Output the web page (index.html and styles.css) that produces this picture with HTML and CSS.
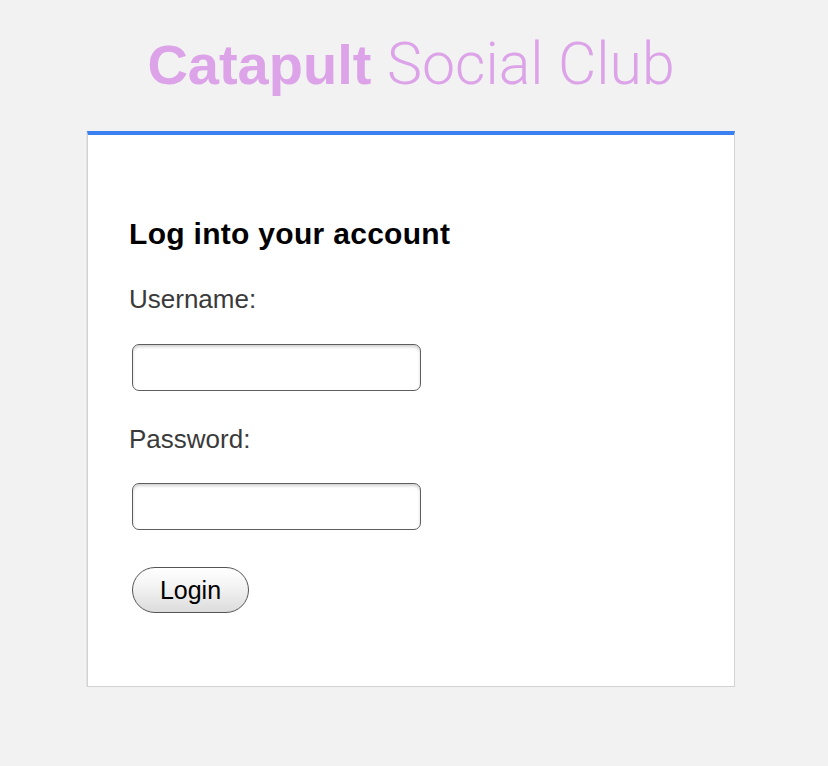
FILE: index.html
```html
<!DOCTYPE html>
<html>
<head>
<meta charset="utf-8">
<link rel="stylesheet" href="styles.css">
</head>
<body>
<div class="page">
  <h1 class="brand"><span class="brand-bold">Catapult</span> <span class="brand-light">Social Club</span></h1>
  <div class="card">
    <h2 class="heading">Log into your account</h2>
    <form class="form">
      <label class="label">Username:</label>
      <input class="field field-user" type="text">
      <label class="label label-pass">Password:</label>
      <input class="field field-pass" type="password">
      <button class="btn" type="button">Login</button>
    </form>
  </div>
</div>
</body>
</html>
```

FILE: styles.css
```css
html, body {
  margin: 0;
  padding: 0;
  background: #f2f2f2;
}
body {
  font-family: "Liberation Sans", Arial, sans-serif;
  height: 766px;
  overflow: hidden;
}
.page {
  width: 648px;
  margin-left: 87px;
  display: flex;
  flex-direction: column;
}
.brand {
  margin: 30px 0 0 0;
  height: 67px;
  font-size: 56px;
  line-height: 67px;
  text-align: center;
  color: #dca3e8;
  font-weight: normal;
  white-space: nowrap;
}
.brand-bold {
  font-weight: bold;
}
.brand-light {
  font-family: "Roboto", "Liberation Sans", sans-serif;
  font-weight: 300;
  font-size: 59px;
}
.card {
  margin-top: 34px;
  background: #fff;
  border: 1px solid #d2d2d2;
  border-top: 4px solid #3a80f0;
  padding: 0 41px 73px 41px;
  box-shadow: -1px 0 0 #e4e4e4;
}
.heading {
  margin: 82px 0 0 0;
  font-size: 30px;
  letter-spacing: 0.3px;
  line-height: 34px;
  font-weight: bold;
  color: #000;
}
.form {
  display: flex;
  flex-direction: column;
  align-items: flex-start;
}
.label {
  margin-top: 34px;
  font-size: 26px;
  line-height: 29px;
  color: #3a3a3a;
}
.label-pass {
  margin-top: 34px;
}
.field {
  margin: 30px 0 0 3px;
  width: 289px;
  height: 47px;
  box-sizing: border-box;
  border: 1px solid #5e5e5e;
  border-radius: 7px;
  background: #fff;
  box-shadow: inset 0 2px 3px rgba(0,0,0,0.18);
  outline: none;
}
.field-pass {
  margin-top: 29px;
}
.btn {
  margin: 37px 0 0 3px;
  width: 117px;
  height: 46px;
  box-sizing: border-box;
  border: 1px solid #555;
  border-radius: 23px;
  background: linear-gradient(#ffffff 0%, #f4f4f4 40%, #dcdcdc 100%);
  font-family: "Liberation Sans", Arial, sans-serif;
  font-size: 25px;
  color: #000;
  padding: 0;
}
```
